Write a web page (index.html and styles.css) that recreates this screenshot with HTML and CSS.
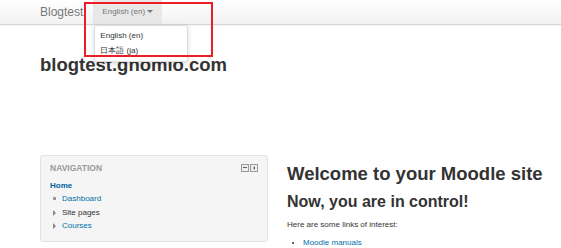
FILE: index.html
```html
<!DOCTYPE html>
<html lang="en">
<head>
  <meta charset="UTF-8">
  <title>blogtest.gnomio.com</title>
  <link rel="stylesheet" href="styles.css">
</head>
<body>
  <div class="navbar">
    <div class="navbar-inner">
      <a class="brand" href="#">Blogtest</a>
      <div class="lang-menu">
        <a class="lang-toggle" href="#">English (en) <span class="caret"></span></a>
        <ul class="dropdown">
          <li><a href="#">English (en)</a></li>
          <li><a href="#">日本語 (ja)</a></li>
        </ul>
        <div class="highlight"></div>
      </div>
    </div>
  </div>

  <div class="page">
    <h1 class="site-name">blogtest.gnomio.com</h1>

    <div class="columns">
      <div class="block">
        <div class="block-header">
          <h2>Navigation</h2>
          <div class="block-controls">
            <span class="ctl ctl-hide"></span>
            <span class="ctl ctl-dock"></span>
          </div>
        </div>
        <ul class="nav-tree">
          <li class="home"><a href="#">Home</a></li>
          <li class="leaf"><a href="#">Dashboard</a></li>
          <li class="branch"><span>Site pages</span></li>
          <li class="branch"><a href="#">Courses</a></li>
        </ul>
      </div>

      <div class="main">
        <h2>Welcome to your Moodle site</h2>
        <h3>Now, you are in control!</h3>
        <p>Here are some links of interest:</p>
        <ul>
          <li><a href="#">Moodle manuals</a></li>
        </ul>
      </div>
    </div>
  </div>
</body>
</html>
```

FILE: styles.css
```css
body {
  margin: 0;
  font-family: "Liberation Sans", Arial, sans-serif;
  font-size: 8px;
  color: #333;
  background: #fff;
  overflow: hidden;
}
a { color: #0070a8; text-decoration: none; }
ul { margin: 0; padding: 0; list-style: none; }

.navbar-inner {
  height: 24px;
  display: flex;
  align-items: stretch;
  padding-left: 40px;
  background: linear-gradient(#ffffff, #f2f2f2);
  border-bottom: 1px solid #d4d4d4;
  box-shadow: 0 1px 3px rgba(0,0,0,0.06);
}
.brand {
  font-size: 12px;
  color: #777;
  line-height: 24px;
  margin-right: 10px;
}
.lang-menu { position: relative; }
.lang-toggle {
  display: block;
  line-height: 24px;
  padding: 0 9px 0 9px;
  color: #777;
  background: #e8e8e8;
}
.caret {
  display: inline-block;
  width: 0;
  height: 0;
  vertical-align: middle;
  border-top: 3px solid #777;
  border-left: 3px solid transparent;
  border-right: 3px solid transparent;
}
.dropdown {
  position: absolute;
  top: 25px;
  left: 1px;
  width: 92px;
  padding: 2px 0 3px;
  background: #fff;
  border: 1px solid #ddd;
  border-radius: 3px;
  box-shadow: 0 2px 5px rgba(0,0,0,0.15);
  z-index: 2;
}
.dropdown a {
  display: block;
  padding: 0 5px;
  line-height: 15px;
  color: #333;
}
.highlight {
  position: absolute;
  top: 2px;
  left: -9px;
  width: 125px;
  height: 51px;
  border: 2px solid #ee1c24;
  z-index: 3;
}

.page { padding-left: 40px; }
.site-name {
  font-size: 18.5px;
  font-weight: bold;
  margin: 28px 0 0;
  line-height: 24px;
}
.columns {
  display: flex;
  gap: 19px;
  margin-top: 78px;
}

.block {
  width: 208px;
  flex: none;
  padding: 6px 9px 8px;
  background: #f5f5f5;
  border: 1px solid #e3e3e3;
  border-radius: 3px;
  align-self: flex-start;
}
.block-header {
  display: flex;
  justify-content: space-between;
  align-items: center;
}
.block-header h2 {
  margin: 0;
  font-size: 8.5px;
  font-weight: bold;
  color: #999;
  text-transform: uppercase;
  line-height: 12px;
}
.block-controls { display: flex; gap: 1px; }
.ctl {
  width: 6px;
  height: 6px;
  border: 1px solid #999;
  background: #eee;
  position: relative;
}
.ctl-hide::after {
  content: "";
  position: absolute;
  left: 1px;
  top: 2px;
  width: 4px;
  height: 1px;
  background: #666;
}
.ctl-dock::after {
  content: "";
  position: absolute;
  left: 2px;
  top: 1px;
  border-right: 2px solid #666;
  border-top: 2px solid transparent;
  border-bottom: 2px solid transparent;
}
.nav-tree { margin-top: 5px; }
.nav-tree li {
  line-height: 13.4px;
  padding-left: 12px;
  position: relative;
}
.nav-tree li.home { padding-left: 0; font-weight: bold; }
.nav-tree li.home a { color: #0060a0; }
.nav-tree li.leaf::before {
  content: "";
  position: absolute;
  left: 3px;
  top: 5px;
  width: 3px;
  height: 3px;
  background: #999;
}
.nav-tree li.branch::before {
  content: "";
  position: absolute;
  left: 3px;
  top: 4px;
  border-left: 3px solid #888;
  border-top: 3px solid transparent;
  border-bottom: 3px solid transparent;
}

.main { flex: none; white-space: nowrap; padding-top: 2px; }
.main h2 {
  font-size: 18.5px;
  margin: 5px 0 0;
  line-height: 24px;
}
.main h3 {
  font-size: 16px;
  margin: 6px 0 0;
  line-height: 20px;
}
.main p { margin: 7px 0 0; line-height: 12px; }
.main ul { margin-top: 6px; padding-left: 16px; list-style: disc; }
.main li { line-height: 12px; }
```
